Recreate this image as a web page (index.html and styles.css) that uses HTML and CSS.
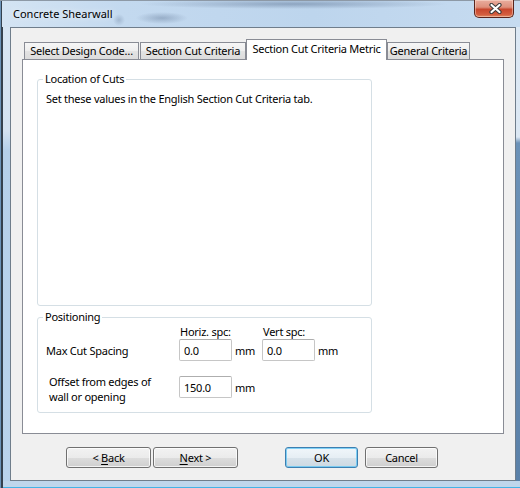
FILE: index.html
```html
<!DOCTYPE html>
<html>
<head>
<meta charset="utf-8">
<title>Concrete Shearwall</title>
<link rel="stylesheet" href="styles.css">
</head>
<body>
<div class="window">
  <div class="titlebar">
    <span class="title">Concrete Shearwall</span>
    <button class="close" type="button" aria-label="Close">
      <svg width="13" height="11" viewBox="0 0 13 11">
        <path d="M2.5 2 L10.5 9 M10.5 2 L2.5 9" stroke="#3a3a3a" stroke-width="4.2" stroke-linecap="round" fill="none"/>
        <path d="M2.5 2 L10.5 9 M10.5 2 L2.5 9" stroke="#ffffff" stroke-width="2.2" stroke-linecap="round" fill="none"/>
      </svg>
    </button>
  </div>
  <div class="client">
    <div class="tabs">
      <div class="tab tab-code">Select Design Code…</div>
      <div class="tab tab-cut">Section Cut Criteria</div>
      <div class="tab tab-metric selected">Section Cut Criteria Metric</div>
      <div class="tab tab-general">General Criteria</div>
    </div>
    <div class="panel">
      <fieldset class="group group-location">
        <legend>Location of Cuts</legend>
        <p class="note">Set these values in the English Section Cut Criteria tab.</p>
      </fieldset>
      <fieldset class="group group-positioning">
        <legend>Positioning</legend>
        <div class="grid">
          <span class="hdr hdr-h">Horiz. spc:</span>
          <span class="hdr hdr-v">Vert spc:</span>
          <span class="lbl lbl-max">Max Cut Spacing</span>
          <input class="field f-h" type="text" value="0.0">
          <span class="unit u-h">mm</span>
          <input class="field f-v" type="text" value="0.0">
          <span class="unit u-v">mm</span>
          <span class="lbl lbl-offset">Offset from edges of<br>wall or opening</span>
          <input class="field f-o" type="text" value="150.0">
          <span class="unit u-o">mm</span>
        </div>
      </fieldset>
    </div>
    <div class="buttons">
      <button class="btn wide btn-back" type="button">&lt; <u>B</u>ack</button>
      <button class="btn wide btn-next" type="button"><u>N</u>ext &gt;</button>
      <button class="btn narrow btn-ok default" type="button">OK</button>
      <button class="btn narrow btn-cancel" type="button">Cancel</button>
    </div>
  </div>
</div>
</body>
</html>
```
FILE: styles.css
```css
html, body {
  margin: 0;
  padding: 0;
  background: #5a80a8;
}

body {
  font-family: "Noto Sans", "DejaVu Sans", sans-serif;
  font-size: 11px;
  letter-spacing: -0.25px;
  color: #000;
}

.window {
  box-sizing: border-box;
  width: 520px;
  height: 488px;
  padding: 0 4px 7px 10px;
  border-top: 1px solid #8d99a6;
  display: flex;
  flex-direction: column;
  background:
    linear-gradient(to right, #6b93b8 0 1px, #34414e 1px 3px) left top / 3px 100% no-repeat,
    linear-gradient(to top, #43b3e6 0 1px, #bfd6ec 1px 7px) left bottom / 100% 7px no-repeat,
    linear-gradient(to bottom, #dce8f4 0, #dbe7f3 136px, #6c92b8 142px, #5a80a8 100%) right top / 4px 100% no-repeat,
    linear-gradient(to bottom, #d8e6f3 0, #d3e2f1 130px, #b5d0ea 150px, #b9d3ec 100%);
}

.titlebar {
  height: 26px;
  flex: none;
  display: flex;
  align-items: flex-start;
  justify-content: space-between;
  margin-left: -8px;
  padding-left: 9px;
  margin-right: -4px;
  padding-right: 6px;
  background:
    radial-gradient(ellipse 155px 5px at 292px 3px, rgba(70, 92, 125, 0.4), rgba(70, 92, 125, 0) 100%),
    radial-gradient(ellipse 26px 6px at 160px 17px, rgba(70, 92, 125, 0.34), rgba(70, 92, 125, 0) 100%),
    radial-gradient(ellipse 6px 6px at 117px 19px, rgba(70, 92, 125, 0.25), rgba(70, 92, 125, 0) 100%),
    linear-gradient(to right, #d4e4f3 0, #c3d9ef 120px, #bdd5ed 60%, #c6dbf0 100%);
}

.title {
  line-height: 26px;
  font-size: 11px;
  letter-spacing: 0;
  color: #000;
  text-shadow: 0 0 6px rgba(255, 255, 255, 0.9);
  padding-left: 2px;
}

.close {
  box-sizing: border-box;
  width: 40px;
  height: 18px;
  margin-top: -1px;
  padding: 0;
  border: 1px solid #5a241c;
  border-top: 0;
  border-radius: 0 0 5px 5px;
  background: linear-gradient(to bottom, #e9ad9e 0, #de907c 42%, #c8472e 55%, #d35d3f 85%, #e08a62 100%);
  box-shadow: inset 0 0 0 1px rgba(255, 230, 220, 0.45);
  display: flex;
  align-items: center;
  justify-content: center;
}

.close svg {
  display: block;
  margin-left: 2px;
}

.client {
  box-sizing: border-box;
  flex: none;
  height: 454px;
  border: 1px solid #6f7d8b;
  background: #f0f0f0;
  padding: 0 11px;
  display: flex;
  flex-direction: column;
}

.tabs {
  display: flex;
  align-items: flex-end;
  height: 20px;
  margin-top: 11px;
  padding-left: 2px;
}

.tab {
  box-sizing: border-box;
  height: 17px;
  border: 1px solid #898c95;
  border-bottom: 0;
  background: linear-gradient(to bottom, #f6f6f6 0, #eeeeee 50%, #e3e3e3 51%, #dcdcdc 100%);
  text-align: center;
  line-height: 16px;
  white-space: nowrap;
  overflow: hidden;
}

.tab-code { width: 115px; margin-right: 1px; }
.tab-cut { width: 106px; }
.tab-metric { width: 141px; }
.tab-general { width: 83px; }

.tab.selected {
  height: 21px;
  line-height: 17px;
  background: #fff;
  margin-bottom: -1px;
  position: relative;
  z-index: 1;
}

.panel {
  box-sizing: border-box;
  flex: none;
  height: 375px;
  background: #fff;
  border: 1px solid #898c95;
  padding: 0 14px;
}

.group {
  box-sizing: border-box;
  width: 335px;
  margin: 0;
  padding: 0;
  min-width: 0;
  border: 1px solid #d5dfe5;
  border-radius: 3px;
}

.group legend {
  padding: 0 2px;
  margin-left: 5px;
  line-height: 16px;
}

.group-location {
  margin-top: 11px;
  height: 235px;
}

.group-positioning {
  margin-top: 3px;
  height: 104px;
}

.note {
  margin: 4px 0 0 8px;
  line-height: 16px;
}

.grid {
  display: grid;
  grid-template-columns: 133px 53px 30px 53px auto;
  grid-template-rows: 14px 22px 15px 22px;
  padding-left: 8px;
}

.hdr {
  line-height: 14px;
  white-space: nowrap;
}

.hdr-h { grid-column: 2 / 4; grid-row: 1; padding-left: 1px; }
.hdr-v { grid-column: 4 / 6; grid-row: 1; padding-left: 1px; }

.lbl { white-space: nowrap; }
.lbl-max { grid-column: 1; grid-row: 2; align-self: center; }
.lbl-offset {
  grid-column: 1;
  grid-row: 4;
  align-self: start;
  margin-top: -2px;
  padding-left: 3px;
  line-height: 15px;
}

.field {
  box-sizing: border-box;
  width: 53px;
  height: 22px;
  margin: 0;
  padding: 0 0 0 4px;
  border: 1px solid #c6c6c6;
  border-top-color: #aeaeae;
  border-radius: 2px;
  background: #fff;
  font: inherit;
  letter-spacing: inherit;
  color: #000;
}

.f-h { grid-column: 2; grid-row: 2; }
.f-v { grid-column: 4; grid-row: 2; }
.f-o { grid-column: 2; grid-row: 4; }

.unit { align-self: center; padding-left: 3px; }
.u-h { grid-column: 3; grid-row: 2; }
.u-v { grid-column: 5; grid-row: 2; }
.u-o { grid-column: 3; grid-row: 4; }

.buttons {
  display: flex;
  margin-top: 13px;
  padding-left: 44px;
}

.btn {
  box-sizing: border-box;
  height: 21px;
  margin: 0;
  padding: 0;
  border: 1px solid #707070;
  border-radius: 3px;
  background: linear-gradient(to bottom, #f2f2f2 0, #ebebeb 50%, #dddddd 51%, #cfcfcf 100%);
  box-shadow: inset 0 0 0 1px rgba(255, 255, 255, 0.75);
  font: inherit;
  letter-spacing: inherit;
  color: #000;
  line-height: 18px;
}

.btn u { text-decoration-thickness: 1px; text-underline-offset: 2px; }

.wide { width: 85px; }
.narrow { width: 73px; }

.btn-next { margin-left: 2px; }
.btn-ok { margin-left: 47px; }
.btn-cancel { margin-left: 7px; }

.btn.default {
  border-color: #3c7fb1;
  background: linear-gradient(to bottom, #f0f6fa 0, #e6eef4 50%, #d7e2ea 51%, #ccd9e2 100%);
  box-shadow: inset 0 0 0 1px rgba(92, 196, 244, 0.75);
}
```
